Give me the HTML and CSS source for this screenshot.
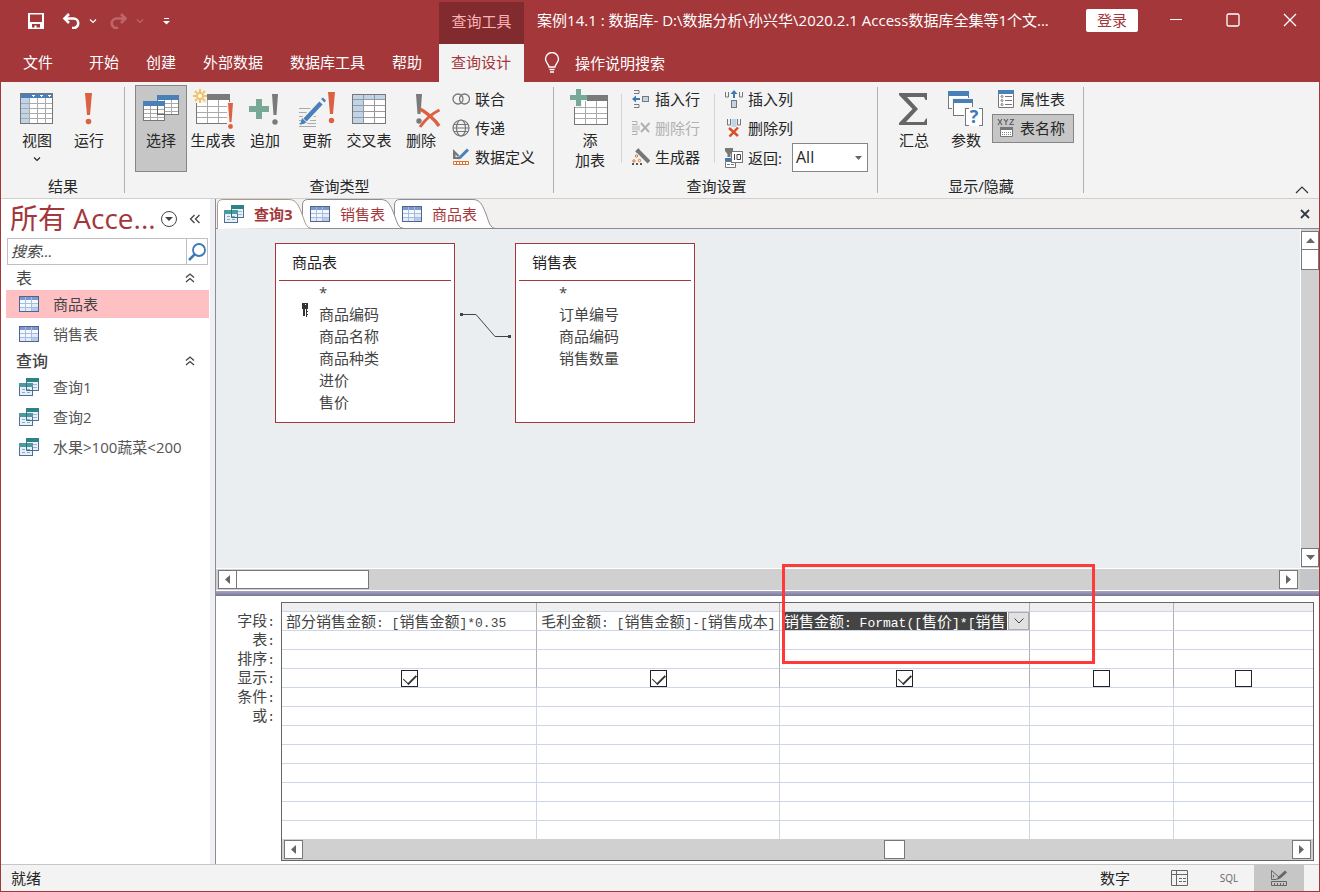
FILE: index.html
```html
<!DOCTYPE html>
<html lang="zh-CN">
<head>
    <meta charset="UTF-8">
    <meta name="viewport" content="width=device-width, initial-scale=1.0">
    <title>案例14.1 : 数据库</title>
    <link rel="stylesheet" href="styles.css">
</head>
<body>
    <!-- shared icons -->
    <svg width="0" height="0" class="defs">
        <symbol id="i-table" viewBox="0 0 20 16">
            <rect x="0" y="0" width="20" height="16" fill="#4f658c"/>
            <rect x="1" y="1" width="18" height="3" fill="#7d98cf"/>
            <path d="M1 4h5v3H1zM7 4h5v3H7zM13 4h6v3h-6zM1 8h5v3H1zM7 8h5v3H7z" fill="#f4f8ff"/>
            <path d="M13 8h6v3h-6zM1 12h5v3H1zM7 12h5v3H7z" fill="#e3ebfa"/>
            <path d="M13 12h6v3h-6z" fill="#b9cbec"/>
            <path d="M6.500 1v14M12.500 1v14M1 7.500h18M1 11.500h18" stroke="#a9bbdc" fill="none"/>
        </symbol>
        <symbol id="i-query" viewBox="0 0 20 18">
            <rect x="7.500" y=".5" width="12" height="12" fill="#e8eff6" stroke="#4c6f93"/>
            <rect x="7" y="0" width="13" height="4" fill="#2f8087"/>
            <path d="M10 6.500h2m2 0h4M14 9.500h4" stroke="#9fb4cc"/>
            <rect x=".5" y="5.500" width="13" height="12" fill="#e8eff6" stroke="#4c6f93"/>
            <rect x="0" y="5" width="14" height="4" fill="#4a9aa0"/>
            <path d="M3 11.500h3m2 0h3M3 14.500h3m2 0h3" stroke="#8fa8c4"/>
            <path d="M7.500 5v7.500h6" stroke="#2f6f86" fill="none"/>
        </symbol>
        <symbol id="i-up" viewBox="0 0 10 10">
            <path d="M1 4.500L5 1l4 3.500M1 9l4-3.500L9 9" stroke="#444" stroke-width="1.300" fill="none"/>
        </symbol>
        <symbol id="i-chev" viewBox="0 0 8 6">
            <path d="M1 1.500l3 3 3-3" stroke="currentColor" stroke-width="1.200" fill="none"/>
        </symbol>
    </svg>

    <div class="app">
        <header class="header">
            <div class="quick">
                <button class="quick-btn" aria-label="保存">
                    <svg width="16" height="16"><path d="M0 0h16v16H0z" fill="#fff"/><path d="M2 1.500h12V9H2zM4 11h8v3.500H8.500V12.500H6.500v2H4z" fill="#a4373a"/></svg>
                </button>
                <button class="quick-btn undo" aria-label="撤销">
                    <svg width="19" height="16"><path d="M7 1L2.500 5.500 7 10M3 5.500h8.500a4.500 4.500 0 0 1 0 9.500H10" fill="none" stroke="#fff" stroke-width="2.600"/></svg>
                    <svg width="8" height="6"><use href="#i-chev"/></svg>
                </button>
                <button class="quick-btn redo" aria-label="恢复" disabled>
                    <svg width="19" height="16"><path d="M12 1l4.500 4.500L12 10M16 5.500H7.500a4.500 4.500 0 0 0 0 9.500H9" fill="none" stroke="currentColor" stroke-width="2.600"/></svg>
                    <svg width="8" height="6"><use href="#i-chev"/></svg>
                </button>
                <button class="quick-btn more" aria-label="自定义">
                    <svg width="7" height="7"><path d="M1 .5h5" stroke="#fff"/><path d="M0 3h7L3.500 6.500z" fill="#fff"/></svg>
                </button>
            </div>
            <div class="context">查询工具</div>
            <div class="titlebar">
                <h1 class="title">案例14.1 : 数据库- D:\数据分析\孙兴华\2020.2.1 Access数据库全集等1个文...</h1>
                <button class="login">登录</button>
                <button class="win-btn" aria-label="最小化"><svg width="14" height="14"><path d="M1 6.500h12" stroke="#fff"/></svg></button>
                <button class="win-btn" aria-label="最大化"><svg width="14" height="14"><rect x="1" y="1" width="12" height="12" rx="1.500" fill="none" stroke="#fff" stroke-width="1.300"/></svg></button>
                <button class="win-btn" aria-label="关闭"><svg width="14" height="14"><path d="M1 1l12 12M13 1L1 13" stroke="#fff" stroke-width="1.300"/></svg></button>
            </div>
            <nav class="menu">
                <button class="menu-tab file">文件</button>
                <button class="menu-tab">开始</button>
                <button class="menu-tab">创建</button>
                <button class="menu-tab">外部数据</button>
                <button class="menu-tab">数据库工具</button>
                <button class="menu-tab">帮助</button>
            </nav>
            <button class="menu-tab active">查询设计</button>
            <button class="tell-me">
                <svg width="16" height="21"><path d="M5 15c0-3-3.500-4-3.500-8a6.500 6.500 0 0 1 13 0c0 4-3.500 5-3.500 8zM5.500 17.500h5M6 20h4" fill="none" stroke="#fff" stroke-width="1.400"/></svg>
                操作说明搜索
            </button>
        </header>

        <div class="ribbon">
            <section class="group">
                <div class="tools">
                    <button class="big">
                        <svg width="40" height="40" shape-rendering="crispEdges"><rect x="3.500" y="4.500" width="32" height="30" fill="#fff" stroke="#777"/><path d="M4 5h31v4H4z" fill="#4a80b8"/><path d="M4 9h8v25H4z" fill="#bfd3e9"/><path d="M12.500 9v25M20.500 9v25M28.500 9v25M4 14.500h31M4 19.500h31M4 24.500h31M4 29.500h31" stroke="#aaa"/><path d="M14 6h4l-2 2zM22 6h4l-2 2zM30 6h4l-2 2z" fill="#fff"/></svg>
                        <span>视图</span>
                        <svg class="drop" width="8" height="6"><use href="#i-chev"/></svg>
                    </button>
                    <button class="big">
                        <svg width="40" height="40"><path d="M16 4h7l-2 22h-3z" fill="#dc6142"/><circle cx="19.500" cy="32.500" r="2.800" fill="#dc6142"/></svg>
                        <span>运行</span>
                    </button>
                </div>
                <h2 class="group-name">结果</h2>
            </section>
            <div class="divider"></div>

            <section class="group">
                <div class="tools">
                    <button class="big pressed">
                        <svg width="40" height="40" shape-rendering="crispEdges"><rect x="16.500" y="6.500" width="21" height="19" fill="#fff" stroke="#777"/><path d="M16 6h22v5H16z" fill="#4a80b8"/><path d="M23.500 11v14M30.500 11v14M17 14.500h20M17 18.500h20M17 22.500h20" stroke="#aaa"/><rect x="2.500" y="12.500" width="21" height="19" fill="#fff" stroke="#777"/><path d="M2 12h22v5H2z" fill="#4a80b8"/><path d="M9.500 17v14M16.500 17v14M3 20.500h20M3 24.500h20M3 28.500h20" stroke="#aaa"/><path d="M16.500 17v8.500h7" stroke="#666" fill="none"/></svg>
                        <span>选择</span>
                    </button>
                    <button class="big">
                        <svg width="40" height="40"><g shape-rendering="crispEdges"><rect x="3.500" y="5.500" width="33" height="29" fill="#fff" stroke="#777"/><path d="M14 5h23v6H14z" fill="#7a7a7a"/><path d="M14.500 11v23M25.500 11v23M4 17.500h32M4 23.500h32M4 28.500h32" stroke="#aaa"/><path d="M0 0h14v14H0zM34 13h6v27h-6z" fill="#f3f3f3"/></g><circle cx="7" cy="7" r="3" fill="#fff" stroke="#f0c264" stroke-width="2"/><path d="M7 0v3M7 11v3M0 7h3M11 7h3M2 2l2 2M10 10l2 2M12 2l-2 2M4 10l-2 2" stroke="#f0c264" stroke-width="2"/><path d="M35 14h5l-1.500 19h-2z" fill="#dc6142"/><circle cx="37.500" cy="37.500" r="2.400" fill="#dc6142"/></svg>
                        <span>生成表</span>
                    </button>
                    <button class="big">
                        <svg width="40" height="40"><path d="M11 10h6v7h7v6h-7v7h-6v-7H4v-6h7z" fill="#78a996"/><path d="M27 5h6l-1.500 21h-3z" fill="#7a7a7a"/><circle cx="30" cy="33" r="2.700" fill="#7a7a7a"/></svg>
                        <span>追加</span>
                    </button>
                    <button class="big">
                        <svg width="40" height="40"><path d="M2 19.500h17M2 23.500h17M2 27.500h17M2 31.500h17M2 34.500h17M2 37.500h17" stroke="#aaa"/><path d="M6 33L26 12" stroke="#f3f3f3" stroke-width="8"/><path d="M8 31L24 14" stroke="#4a80b8" stroke-width="4.500"/><path d="M3 36l2-7 4.500 4.500zM24 10l2-1.500 3 3-1.500 2z" fill="#4a80b8"/><path d="M31 3h7l-2 22h-3z" fill="#dc6142"/><circle cx="34.500" cy="31.500" r="2.700" fill="#dc6142"/></svg>
                        <span>更新</span>
                    </button>
                    <button class="big">
                        <svg width="40" height="40" shape-rendering="crispEdges"><rect x="3.500" y="5.500" width="33" height="29" fill="#fff" stroke="#777"/><path d="M4 6h32v4H4zM4 10h10v24H4z" fill="#bfd3e9"/><path d="M14.500 6v28M25.500 6v28M4 10.500h32M4 16.500h32M4 22.500h32M4 28.500h32" stroke="#999"/></svg>
                        <span>交叉表</span>
                    </button>
                    <button class="big">
                        <svg width="40" height="40"><path d="M15 5h6l-1.500 20h-3z" fill="#7a7a7a"/><circle cx="18" cy="32" r="2.700" fill="#7a7a7a"/><path d="M19 20c4 2 14 9 19 17" stroke="#dc6142" stroke-width="3.500" fill="none"/><path d="M38.500 21C30 25 24 31 19 38" stroke="#dc6142" stroke-width="3" fill="none"/></svg>
                        <span>删除</span>
                    </button>
                    <div class="stack">
                        <button class="small">
                            <svg width="18" height="18"><g fill="none" stroke="#777" stroke-width="1.300"><circle cx="6" cy="9" r="5"/><circle cx="12.500" cy="9" r="5"/></g></svg>联合
                        </button>
                        <button class="small">
                            <svg width="18" height="18"><g fill="none" stroke="#777" stroke-width="1.200"><circle cx="9" cy="9" r="8"/><ellipse cx="9" cy="9" rx="4.500" ry="8"/><path d="M2 5.500h14M2 12.500h14M1 9h16"/></g></svg>传递
                        </button>
                        <button class="small">
                            <svg width="18" height="18"><path d="M1 1l10 10H1zM3.500 6.500v2.500H6z" fill="#777" fill-rule="evenodd"/><path d="M8 10l8-8" stroke="#f3f3f3" stroke-width="5"/><path d="M8.500 9L16 1.500" stroke="#4a80b8" stroke-width="3"/><path d="M6 11.500l1.500-4 2.500 2.500z" fill="#4a80b8"/><path d="M1.500 13.500h15v3h-15zM4.500 14v2M7.500 14v2M10.500 14v2M13.500 14v2" fill="#fff" stroke="#dd7226"/></svg>数据定义
                        </button>
                    </div>
                </div>
                <h2 class="group-name">查询类型</h2>
            </section>
            <div class="divider"></div>

            <section class="group settings">
                <div class="tools">
                    <button class="big">
                        <svg width="40" height="40"><g shape-rendering="crispEdges"><rect x="4.500" y="6.500" width="33" height="29" fill="#fff" stroke="#777"/><path d="M17 6h21v6H17z" fill="#7a7a7a"/><path d="M15.500 12v23M26.500 12v23M5 18.500h32M5 24.500h32M5 29.500h32" stroke="#aaa"/><path d="M0 0h17v12h-5v6H4v-5H0z" fill="#f3f3f3"/></g><path d="M6 0h5v6h6v5h-6v6H6v-6H0V6h6z" fill="#78a996"/></svg>
                        <span>添<br>加表</span>
                    </button>
                    <div class="split"></div>
                    <div class="stack">
                        <button class="small">
                            <svg width="18" height="18"><path d="M2 .5h5v3H2M2 17.500h5v-3H2" fill="none" stroke="#777"/><rect x="10.500" y="6.500" width="6" height="5" fill="#bfd3e9" stroke="#777"/><path d="M0 9l4-3.500V8h4v2H4v2.500z" fill="#3f78b5"/></svg>插入行
                        </button>
                        <button class="small" disabled>
                            <svg width="18" height="18"><path d="M0 2.500h5v3H0M0 15.500h5v-3H0" fill="none" stroke="#b1b1b1"/><path d="M0 6.500h8v5H0z" fill="#d5d3d8"/><path d="M9 4l8 9M17.500 4L9 13" stroke="#b1b1b1" stroke-width="2"/></svg>删除行
                        </button>
                        <button class="small">
                            <svg width="18" height="18"><path d="M5 2l12 12" stroke="#777" stroke-width="4"/><path d="M4 4l3-3" stroke="#777" stroke-width="2"/><g fill="none" stroke="#dd7226"><circle cx="4.500" cy="8" r="1.200"/><circle cx="2" cy="13" r="1.200"/><circle cx="7.500" cy="12.500" r="1.200"/></g><path d="M0 15h2v2H0zM4 15h2v2H4zM8 15h2v2H8z" fill="#555"/></svg>生成器
                        </button>
                    </div>
                    <div class="split"></div>
                    <div class="stack">
                        <button class="small">
                            <svg width="18" height="18"><path d="M.5 2v5h3V2M14.500 2v5h3V2" fill="none" stroke="#777"/><rect x="6.500" y="10.500" width="5" height="7" fill="#bfd3e9" stroke="#777"/><path d="M9 0l3.500 4H10v4H8V4H5.500z" fill="#3f78b5"/></svg>插入列
                        </button>
                        <button class="small">
                            <svg width="18" height="18"><path d="M2.500 0v6h3V0M12.500 0v6h3V0" fill="none" stroke="#777"/><path d="M6.500 0h5v8h-5z" fill="#bfd3e9"/><path d="M4 9l9 8M13 8.500L4.500 17.500" stroke="#d84f2a" stroke-width="2.500"/></svg>删除列
                        </button>
                        <div class="small return">
                            <svg width="18" height="20"><path d="M0 0h8v3L5.500 6v3h-3V6L0 3z" fill="#777"/><path d="M0 10h7v3H0z" fill="#3f78b5"/><path d="M.5 13.500h10v6H.5zM2 16.500h3M6 16.500h3" fill="#fff" stroke="#777"/><rect x="6.500" y="3.500" width="11" height="11" fill="#fff" stroke="#777"/><path d="M9.500 6v6M12 6.500h3.500v5H12z" fill="none" stroke="#444"/></svg>
                            <label for="top">返回:</label>
                            <select id="top"><option>All</option><option>5</option><option>25</option><option>100</option></select>
                        </div>
                    </div>
                </div>
                <h2 class="group-name">查询设置</h2>
            </section>
            <div class="divider"></div>

            <section class="group">
                <div class="tools">
                    <button class="big">
                        <svg width="40" height="40"><path d="M5 4h28v7h-1.500L30 8H13l11 12-12 13h18l2-3.500H33V36H5v-2l13.500-14L5 6z" fill="#666"/></svg>
                        <span>汇总</span>
                    </button>
                    <button class="big">
                        <svg width="40" height="40"><g shape-rendering="crispEdges"><rect x="2.500" y="2.500" width="20" height="17" fill="#fff" stroke="#777"/><path d="M2 2h21v5H2z" fill="#4a80b8"/><path d="M6 9h22v19H6z" fill="#f3f3f3"/><rect x="7.500" y="10.500" width="19" height="16" fill="#fff" stroke="#777"/><path d="M7 10h20v4H7z" fill="#4a80b8"/><rect x="18" y="18" width="20" height="21" fill="#f3f3f3"/><path d="M20 20h16v17H20z" fill="#fff"/><path d="M23 19.500h-3.500v17H23M33 19.500h3.500v17H33" stroke="#777" fill="none"/></g><text x="28" y="34" text-anchor="middle" class="mark">?</text></svg>
                        <span>参数</span>
                    </button>
                    <div class="stack">
                        <button class="small">
                            <svg width="18" height="18"><path d="M1.500.5h15v17h-15z" fill="#fff" stroke="#777"/><path d="M1 0h16v4H1z" fill="#4a80b8"/><path d="M8 6.500h7M8 10.500h7M8 14.500h7" stroke="#777"/><g fill="none" stroke="#777"><circle cx="5" cy="6.500" r="1"/><circle cx="5" cy="10.500" r="1"/><circle cx="5" cy="14.500" r="1"/></g></svg>属性表
                        </button>
                        <button class="small pressed">
                            <svg width="18" height="18"><path d="M1 0l4 6M5 0L1 6M7 0l2 3 2-3M9 3v3M13 .5h3.500L13 5.500h4" stroke="#666" stroke-width="1.200" fill="none"/><path d="M3.500 8.500h12v9h-12z" fill="#fff" stroke="#777"/><path d="M3 8h13v3H3z" fill="#777"/><path d="M5 13.500h9M5 15.500h9" stroke="#888" stroke-dasharray="1 1"/></svg>表名称
                        </button>
                    </div>
                </div>
                <h2 class="group-name">显示/隐藏</h2>
            </section>
            <div class="divider"></div>
            <button class="collapse" aria-label="折叠功能区"><svg width="14" height="8"><path d="M1 7l6-6 6 6" fill="none" stroke="#333" stroke-width="1.200"/></svg></button>
        </div>

        <main class="main">
            <aside class="nav">
                <div class="nav-head">
                    <h2 class="nav-title">所有 Acce...</h2>
                    <button class="nav-btn" aria-label="选择类别"><svg width="18" height="18"><circle cx="9" cy="9" r="7.500" fill="none" stroke="#444"/><path d="M5 7h8l-4 4z" fill="#444"/></svg></button>
                    <button class="nav-btn" aria-label="折叠"><svg width="12" height="10"><path d="M5.500 1l-4 4 4 4M10.500 1l-4 4 4 4" fill="none" stroke="#444" stroke-width="1.300"/></svg></button>
                </div>
                <div class="search">
                    <input type="text" class="search-input" placeholder="搜索..." aria-label="搜索">
                    <button class="search-btn" aria-label="开始搜索"><svg width="18" height="18"><circle cx="11" cy="7" r="6" fill="none" stroke="#3f78b5" stroke-width="1.800"/><path d="M7 11l-6 6" stroke="#3f78b5" stroke-width="2.500"/></svg></button>
                </div>
                <h3 class="nav-group">表 <svg width="10" height="10"><use href="#i-up"/></svg></h3>
                <ul class="nav-list">
                    <li class="selected"><svg width="20" height="16"><use href="#i-table"/></svg>商品表</li>
                    <li><svg width="20" height="16"><use href="#i-table"/></svg>销售表</li>
                </ul>
                <h3 class="nav-group strong">查询 <svg width="10" height="10"><use href="#i-up"/></svg></h3>
                <ul class="nav-list">
                    <li><svg width="20" height="18"><use href="#i-query"/></svg>查询1</li>
                    <li><svg width="20" height="18"><use href="#i-query"/></svg>查询2</li>
                    <li><svg width="20" height="18"><use href="#i-query"/></svg>水果&gt;100蔬菜&lt;200</li>
                </ul>
            </aside>

            <div class="doc">
                <div class="doc-tabs">
                    <button class="doc-tab current">
                        <svg class="tab-shape" width="96" height="30"><path d="M.5 30V6Q.5.500 6 .5H72C80 .5 82 8 85 15C88 23 89 29.500 95 29.500" fill="#fff" stroke="#b09a86"/></svg>
                        <svg width="20" height="18"><use href="#i-query"/></svg>查询3
                    </button>
                    <button class="doc-tab second">
                        <svg class="tab-shape" width="103" height="30"><path d="M.5 21V6Q.5.500 6 .5H79C87 .5 89 8 92 15C95 23 96 29.500 102 29.500H9Q3 29 .5 21" fill="#fff" stroke="#8b8d94"/></svg>
                        <svg width="20" height="16"><use href="#i-table"/></svg>销售表
                    </button>
                    <button class="doc-tab">
                        <svg class="tab-shape" width="103" height="30"><path d="M.5 21V6Q.5.500 6 .5H79C87 .5 89 8 92 15C95 23 96 29.500 102 29.500H9Q3 29 .5 21" fill="#fff" stroke="#8b8d94"/></svg>
                        <svg width="20" height="16"><use href="#i-table"/></svg>商品表
                    </button>
                    <button class="doc-close" aria-label="关闭"><svg width="10" height="10"><path d="M1 1l8 8M9 1L1 9" stroke="#333b48" stroke-width="1.800"/></svg></button>
                </div>

                <div class="design">
                    <div class="canvas">
                        <div class="entity goods">
                            <h4>商品表</h4>
                            <ul>
                                <li>*</li>
                                <li class="key"><svg width="8" height="15"><path d="M1 0h6v6H6v8H5V6H3v7H2V6H1z" fill="#333"/><path d="M4 1h1v1H4z" fill="#fff"/><path d="M3 6h1v7H3zM6 8h1v1H6zM6 11h1v1H6z" fill="#333"/></svg>商品编码</li>
                                <li>商品名称</li>
                                <li>商品种类</li>
                                <li>进价</li>
                                <li>售价</li>
                            </ul>
                        </div>
                        <div class="entity sales">
                            <h4>销售表</h4>
                            <ul>
                                <li>*</li>
                                <li>订单编号</li>
                                <li>商品编码</li>
                                <li>销售数量</li>
                            </ul>
                        </div>
                        <svg class="join" width="52" height="28"><path d="M2 3.500h14l19 22h14" fill="none" stroke="#444"/><path d="M0 2h3v3H0zM48 24h3v3h-3z" fill="#444"/></svg>
                    </div>
                    <div class="vscroll">
                        <button class="arrow" aria-label="向上"><svg width="9" height="5"><path d="M0 5h9L4.500 0z" fill="#666"/></svg></button>
                        <div class="thumb"></div>
                        <button class="arrow down" aria-label="向下"><svg width="9" height="5"><path d="M0 0h9L4.500 5z" fill="#666"/></svg></button>
                    </div>
                </div>
                <div class="hscroll-row">
                    <div class="hscroll">
                        <button class="arrow" aria-label="向左"><svg width="5" height="9"><path d="M5 0v9L0 4.500z" fill="#666"/></svg></button>
                        <div class="thumb"></div>
                        <button class="arrow end" aria-label="向右"><svg width="5" height="9"><path d="M0 0v9l5-4.500z" fill="#666"/></svg></button>
                    </div>
                    <div class="corner"></div>
                </div>
                <div class="splitter"></div>

                <div class="qbe">
                    <ul class="qbe-labels">
                        <li>字段<b>:</b></li>
                        <li>表<b>:</b></li>
                        <li>排序<b>:</b></li>
                        <li>显示<b>:</b></li>
                        <li>条件<b>:</b></li>
                        <li>或<b>:</b></li>
                    </ul>
                    <div class="qbe-grid">
                        <table>
                            <colgroup><col class="c1"><col class="c2"><col class="c3"><col class="c4"><col></colgroup>
                            <thead>
                                <tr><th></th><th></th><th></th><th></th><th></th></tr>
                            </thead>
                            <tbody>
                                <tr>
                                    <td class="field">部分销售金额<b>: [</b>销售金额<b>]*0.35</b></td>
                                    <td class="field">毛利金额<b>: [</b>销售金额<b>]-[</b>销售成本<b>]</b></td>
                                    <td>
                                        <div class="combo">
                                            <div class="combo-text" contenteditable="true" role="textbox" aria-label="字段">销售金额<b>: Format([</b>售价<b>]*[</b>销售</div>
                                            <button class="combo-btn" aria-label="选择字段"><svg width="10" height="6"><path d="M.5.500L5 5 9.500.500" fill="none" stroke="#444"/></svg></button>
                                        </div>
                                    </td>
                                    <td></td>
                                    <td></td>
                                </tr>
                                <tr><td></td><td></td><td></td><td></td><td></td></tr>
                                <tr><td></td><td></td><td></td><td></td><td></td></tr>
                                <tr>
                                    <td><input type="checkbox" aria-label="显示 部分销售金额" checked></td>
                                    <td><input type="checkbox" aria-label="显示 毛利金额" checked></td>
                                    <td><input type="checkbox" aria-label="显示 销售金额" checked></td>
                                    <td><input type="checkbox" aria-label="显示"></td>
                                    <td><input type="checkbox" aria-label="显示"></td>
                                </tr>
                                <tr><td></td><td></td><td></td><td></td><td></td></tr>
                                <tr><td></td><td></td><td></td><td></td><td></td></tr>
                                <tr><td></td><td></td><td></td><td></td><td></td></tr>
                                <tr><td></td><td></td><td></td><td></td><td></td></tr>
                                <tr><td></td><td></td><td></td><td></td><td></td></tr>
                                <tr><td></td><td></td><td></td><td></td><td></td></tr>
                                <tr><td></td><td></td><td></td><td></td><td></td></tr>
                                <tr><td></td><td></td><td></td><td></td><td></td></tr>
                            </tbody>
                        </table>
                        <div class="hscroll">
                            <button class="arrow" aria-label="向左"><svg width="5" height="9"><path d="M5 0v9L0 4.500z" fill="#666"/></svg></button>
                            <div class="thumb short"></div>
                            <button class="arrow end" aria-label="向右"><svg width="5" height="9"><path d="M0 0v9l5-4.500z" fill="#666"/></svg></button>
                        </div>
                    </div>
                    <div class="highlight"></div>
                </div>
            </div>
        </main>

        <footer class="status">
            <span>就绪</span>
            <span class="num">数字</span>
            <button class="view" aria-label="数据表视图"><svg width="17" height="16"><path d="M.5.500h16v15H.5zM5.500.500v15M.5 4.500h16M8 8.500h3M12 8.500h3M8 11.500h3M12 11.500h3" fill="none" stroke="#666"/></svg></button>
            <button class="view sql">SQL</button>
            <button class="view on" aria-label="设计视图"><svg width="18" height="17"><path d="M1.500.500v9H6L9 7zM3.500 5v2.500" fill="none" stroke="#666"/><path d="M7 10l2-4 6-5.500 2 2L11 8z" fill="#666"/><path d="M1.500 11.500h15v4h-15zM4.500 13v2M7.500 13v2M10.500 13v2M13.500 13v2" fill="none" stroke="#666"/></svg></button>
        </footer>
    </div>
</body>
</html>
```

FILE: styles.css
```css
* {
    box-sizing: border-box;
}

body {
    margin: 0;
    font-family: "Open Sans", "Noto Sans CJK SC", sans-serif;
    font-size: 15px;
    line-height: 20px;
    color: #262626;
}

button {
    font: inherit;
    color: inherit;
    background: none;
    border: 0;
    padding: 0;
    cursor: pointer;
}

h1, h2, h3, h4, ul {
    margin: 0;
    padding: 0;
    font-size: 15px;
    font-weight: normal;
    list-style: none;
}

svg {
    display: block;
    flex: none;
}

.defs {
    position: absolute;
}

.app {
    display: flex;
    flex-direction: column;
    min-height: 100vh;
    border: 1px solid #a4373a;
    background: #fff;
}

/* title bar and tabs */
.header {
    display: grid;
    grid-template-columns: auto auto 1fr;
    grid-template-rows: 42px 38px;
    padding-top: 1px;
    background: #a4373a;
    color: #fff;
}

.quick {
    display: flex;
    align-items: center;
    padding: 0 0 4px 27px;
}

.quick-btn {
    display: flex;
    align-items: center;
    gap: 8px;
}

.undo {
    margin-left: 18px;
}

.redo {
    margin-left: 12px;
    color: #bf6669;
}

.more {
    margin-left: 19px;
}

.context {
    display: flex;
    align-items: center;
    justify-content: center;
    padding-bottom: 4px;
    background: #822b2e;
    color: #ffb3b8;
}

.titlebar {
    display: flex;
    align-items: center;
    padding: 0 1px 6px 13px;
    min-width: 0;
}

.title {
    flex: 1;
    white-space: nowrap;
    overflow: hidden;
    text-overflow: ellipsis;
}

.login {
    width: 52px;
    height: 23px;
    margin: 0 9px 0 20px;
    border-radius: 2px;
    background: #fff;
    color: #a4373a;
}

.win-btn {
    display: flex;
    justify-content: center;
    width: 57px;
}

.menu {
    display: flex;
    gap: 1px;
    margin-right: 4px;
}

.menu-tab {
    padding: 0 13px 3px;
}

.menu-tab.file {
    margin: 0 9px;
}

.menu-tab.active {
    padding: 0 13px 3px 12px;
    background: #f3f3f3;
    color: #a4373a;
}

.tell-me {
    display: flex;
    align-items: center;
    justify-self: start;
    gap: 15px;
    padding: 0 0 1px 20px;
}

/* ribbon */
.ribbon {
    display: flex;
    height: 117px;
    padding-top: 3px;
    background: #f3f3f3;
    border-bottom: 1px solid #d0d0d0;
}

.group {
    padding: 0 9px 0 10px;
}

.group.settings {
    padding-right: 8px;
}

.tools {
    display: flex;
    height: 87px;
}

.group-name {
    margin-top: 4px;
    text-align: center;
}

.divider {
    width: 1px;
    margin: 2px 0 5px;
    background: #b1b1b1;
}

.split {
    width: 1px;
    margin: 9px 5px;
    background: #d4d4d4;
}

.big {
    display: flex;
    flex-direction: column;
    align-items: center;
    width: 52px;
    padding-top: 3px;
    border: 1px solid transparent;
    white-space: nowrap;
}

.big span {
    margin-top: 1px;
}

.big svg {
    overflow: visible;
}

.drop {
    margin-top: 6px;
}

.pressed {
    background: #c6c6c6;
    border-color: #868686;
}

.stack {
    display: flex;
    flex-direction: column;
}

.small {
    display: flex;
    align-items: center;
    gap: 5px;
    height: 29px;
    padding: 0 8px 2px 4px;
    border: 1px solid transparent;
}

.small.pressed {
    border-color: #868686;
}

.small:disabled {
    color: #b1b1b1;
}

.small.return {
    padding: 0 0 0 4px;
}

.return select {
    appearance: none;
    width: 76px;
    height: 29px;
    margin-left: 5px;
    padding: 0 3px 2px;
    border: 1px solid #868686;
    border-radius: 0;
    background: #fff url("data:image/svg+xml,%3Csvg xmlns='http://www.w3.org/2000/svg' width='7' height='4'%3E%3Cpath d='M0 0h7L3.500 4z' fill='%23666'/%3E%3C/svg%3E") no-repeat right 5px center;
    font: inherit;
    font-size: 16px;
    color: #262626;
}

.mark {
    font-size: 18px;
    font-weight: bold;
    fill: #3f78b5;
}

.collapse {
    align-self: flex-end;
    margin: 0 10px 4px auto;
}

/* navigation pane */
.main {
    display: flex;
    flex: 1;
}

.nav {
    width: 215px;
    padding: 0 1px 0 5px;
    background: #fff;
    border-right: 1px solid #8a8c97;
    box-shadow: inset -5px 0 #eff0f3;
}

.nav-head {
    display: flex;
    align-items: center;
    height: 39px;
    padding: 0 13px 0 4px;
}

.nav-title {
    flex: 1;
    font-size: 28px;
    line-height: 36px;
    padding-bottom: 2px;
    color: #a4373a;
    white-space: nowrap;
}

.nav-btn + .nav-btn {
    margin: 0 0 0 11px;
}

.search {
    display: flex;
    width: 201px;
    height: 27px;
    margin-left: 1px;
    border: 1px solid #c0c0c0;
}

.search-input {
    flex: 1;
    min-width: 0;
    padding: 0 3px 2px;
    border: 0;
    border-right: 1px solid #c0c0c0;
    font: inherit;
    font-style: italic;
}

.search-input::placeholder {
    color: #444;
}

.search-btn {
    padding: 0 1px;
}

.nav-group {
    display: flex;
    align-items: center;
    justify-content: space-between;
    height: 25px;
    padding: 0 19px 0 10px;
    font-size: 16px;
    color: #444;
}

.nav-group.strong {
    font-weight: 500;
}

.nav-list {
    display: grid;
    gap: 2px;
    width: 203px;
}

.nav-list li {
    display: flex;
    align-items: center;
    gap: 14px;
    height: 28px;
    padding-left: 13px;
    color: #555;
    white-space: nowrap;
}

.nav-list .selected {
    background: #ffc0c4;
    color: #444;
}

/* document tabs */
.doc {
    display: flex;
    flex: 1;
    flex-direction: column;
    min-width: 0;
}

.doc-tabs {
    display: flex;
    height: 30px;
    padding-left: 1px;
    background: #f3f1ef;
    border-bottom: 1px solid #8a8c97;
}

.doc-tab {
    position: relative;
    z-index: 1;
    display: flex;
    align-items: center;
    gap: 10px;
    width: 92px;
    height: 30px;
    padding-left: 8px;
    color: #a4373a;
    white-space: nowrap;
}

.doc-tab .tab-shape {
    position: absolute;
    left: 0;
    top: 0;
    z-index: -1;
}

.doc-tab.second {
    z-index: 2;
}

.doc-tab.current {
    z-index: 3;
    width: 85px;
    padding-left: 7px;
    font-weight: bold;
}

.doc-close {
    margin: 0 9px 0 auto;
}

/* design surface */
.design {
    display: flex;
    flex: 1;
    min-height: 200px;
}

.canvas {
    position: relative;
    flex: 1;
    background: #eaeef1;
}

.entity {
    position: absolute;
    top: 14px;
    width: 180px;
    height: 180px;
    padding: 0 3px;
    background: #fff;
    border: 1px solid #a4373a;
    color: #444;
}

.goods {
    left: 59px;
}

.sales {
    left: 299px;
}

.entity h4 {
    height: 37px;
    padding-left: 13px;
    border-bottom: 1px solid #a4373a;
    line-height: 36px;
    color: #222;
}

.entity li {
    height: 22px;
    padding-left: 40px;
    line-height: 22px;
}

.entity .key {
    display: flex;
    gap: 10px;
    padding-left: 22px;
}

.join {
    position: absolute;
    left: 244px;
    top: 82px;
}

.vscroll {
    display: flex;
    flex-direction: column;
    width: 19px;
    padding-top: 2px;
    border-left: 1px solid #fff;
    background: #d0d0d0;
}

.arrow {
    display: flex;
    align-items: center;
    justify-content: center;
    flex: none;
    width: 19px;
    height: 19px;
    background: #fff;
    border: 1px solid #777;
}

.vscroll .arrow,
.vscroll .thumb {
    width: 18px;
}

.thumb {
    background: #fff;
    border: 1px solid #777;
}

.vscroll .thumb {
    height: 21px;
    margin-top: -1px;
}

.down {
    margin: auto 0 1px;
}

.hscroll-row {
    display: flex;
    height: 23px;
    border-top: 1px solid #fff;
    border-bottom: 1px solid #fff;
}

.hscroll {
    display: flex;
    flex: 1;
    height: 21px;
    padding: 1px 2px;
    background: #d0d0d0;
}

.hscroll .thumb {
    width: 133px;
    height: 19px;
    margin-left: -1px;
}

.hscroll .thumb.short {
    width: 21px;
    margin-left: calc(56% + 6px);
}

.end {
    margin-left: auto;
}

.corner {
    width: 19px;
    background: #c5c6ca;
}

.splitter {
    height: 5px;
    background: linear-gradient(#a9a6c0, #77769a);
}

/* query grid */
.qbe {
    position: relative;
    display: flex;
    padding: 6px 5px 3px 0;
    color: #444;
}

.qbe b {
    font-family: "Liberation Mono", monospace;
    font-size: 13px;
    font-weight: normal;
    line-height: 0;
    white-space: pre;
}

.qbe-labels {
    width: 65px;
    padding: 9px 6px 0 0;
    text-align: right;
}

.qbe-labels li {
    height: 19px;
    line-height: 19px;
}

.qbe-grid {
    flex: 1;
    min-width: 0;
    border: 1px solid #666;
}

.qbe-grid table {
    width: 100%;
    table-layout: fixed;
    border-spacing: 0;
}

.c1 { width: 255px; }
.c2 { width: 243px; }
.c3 { width: 250px; }
.c4 { width: 144px; }

.qbe-grid th {
    height: 9px;
    padding: 0;
    background: #efefef;
    border-right: 1px solid #b0b0b0;
    border-bottom: 1px solid #cdd6e6;
}

.qbe-grid td {
    height: 19px;
    padding: 0;
    border-right: 1px solid #cdd6e6;
    border-bottom: 1px solid #cdd6e6;
    line-height: 18px;
    white-space: nowrap;
    text-align: center;
    overflow: hidden;
}

.qbe-grid tr:nth-child(-n+4) td {
    border-right-color: #b0b0b0;
}

.qbe-grid tr > :last-child {
    border-right: 0;
}

.qbe-grid tbody tr:last-child td {
    height: 18px;
    border-bottom: 0;
}

.qbe-grid td.field {
    padding-left: 4px;
    text-align: left;
}

.qbe-grid input {
    appearance: none;
    display: block;
    width: 17px;
    height: 17px;
    margin: 0 auto;
    border: 1px solid #222;
    background: #fff;
}

.qbe-grid input:checked::after {
    content: "";
    display: block;
    width: 11px;
    height: 6px;
    margin: 3px 0 0 2px;
    border-left: 1px solid #333;
    border-bottom: 2px solid #333;
    transform: rotate(-45deg);
}

.combo {
    display: flex;
    gap: 1px;
    height: 18px;
    padding-left: 4px;
    text-align: left;
}

.combo-text {
    flex: 1;
    overflow: hidden;
    background: #444;
    color: #fff;
    outline: none;
}

.combo-btn {
    display: flex;
    align-items: center;
    justify-content: center;
    width: 21px;
    height: 18px;
    background: #e1e1e1;
    border: 1px solid #adadad;
}

.highlight {
    position: absolute;
    left: 566px;
    top: -32px;
    width: 313px;
    height: 100px;
    border: 3px solid #ff3838;
    pointer-events: none;
}

/* status bar */
.status {
    display: flex;
    align-items: center;
    height: 27px;
    padding: 0 15px 0 10px;
    background: #f3f3f3;
    border-top: 1px solid #c6c6c6;
}

.num {
    margin: 0 24px 0 auto;
}

.view {
    display: flex;
    align-items: center;
    justify-content: center;
    width: 50px;
    height: 26px;
    color: #666;
}

.sql {
    font-size: 10px;
}

.on {
    background: #c6c6c6;
}
```
